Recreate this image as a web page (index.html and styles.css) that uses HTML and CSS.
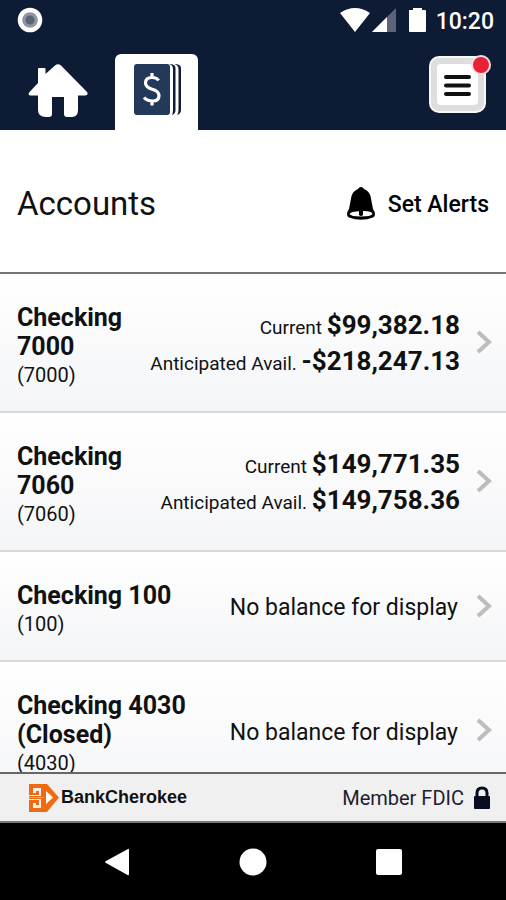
FILE: index.html
```html
<!DOCTYPE html>
<html lang="en">
<head>
<meta charset="utf-8">
<meta name="viewport" content="width=device-width, initial-scale=1">
<title>Accounts</title>
<link rel="stylesheet" href="styles.css">
</head>
<body>
<div class="status">
  <svg width="26" height="26" viewBox="0 0 26 26" aria-hidden="true"><circle cx="13" cy="13" r="12.3" fill="#fff"/><circle cx="13" cy="13" r="7.8" fill="#8d96a5"/><circle cx="13" cy="13" r="4.5" fill="#5a6475"/></svg>
  <div class="status-right">
    <svg width="90" height="26" viewBox="0 0 90 26" aria-hidden="true"><path d="M0 6Q15-4 30 6L15 25Z" fill="#fff"/><path d="M32 25L56 1V25Z" fill="#5a6579"/><path d="M32 25L47 10V25Z" fill="#fff"/><path d="M69 3H73V1H82V3H85Q86 3 86 4V24Q86 25 85 25H70Q69 25 69 24Z" fill="#fff"/></svg>
    <span class="clock">10:20</span>
  </div>
</div>
<nav class="tabs">
  <a class="tab" href="#home" aria-label="Home"><svg width="62" height="54" viewBox="0 0 62 54" aria-hidden="true"><path d="M11 5Q11 4 12 4H17.500Q18.500 4 18.500 5V10L28 1.500Q31 -1 34 1.500L60 28Q62 31 58 31.500H51V46Q51 53 45 53H40Q37 53 37 50V33H25V50Q25 53 22 53H19Q11 53 11 46V31.500H4Q0 31.500 2.500 28L11 19Z" fill="#fff"/></svg></a>
  <a class="tab tab-active" href="#accounts" aria-label="Accounts"><svg width="50" height="54" viewBox="0 0 50 54" aria-hidden="true"><rect x="0" y="1" width="36" height="51" rx="3" fill="#23395a"/><path d="M35 1Q41.500 1 41.500 5V47Q41.500 51 38 52Q39 50 39 47V6Q39 2 35 1ZM40 1Q47 1 47 5V47Q47 51 43 52Q44.500 50 44.500 47V6Q44.500 2 40 1Z" fill="#141c35"/><path d="M24.500 17.500Q23 14.500 18 14.500Q11.500 14.500 11.500 20Q11.500 24 17.500 26Q25 28 25 32.500Q25 38 18.500 38Q13 38 10 34.500M18 10V15M18 37V42.500" fill="none" stroke="#fff" stroke-width="3.200"/></svg></a>
  <button class="menu" type="button" aria-label="Menu, new items"><svg width="62" height="60" viewBox="0 0 62 60" aria-hidden="true"><rect x="1" y="3" width="55" height="55" rx="9" fill="#dedede" stroke="#f8f8f8" stroke-width="2"/><rect x="8" y="10" width="41" height="41" rx="4" fill="#fff"/><path d="M17 23H40M17 31.500H40M17 40H40" stroke="#111" stroke-width="4" stroke-linecap="round"/><circle cx="52" cy="11" r="10" fill="#f6dfe3"/><circle cx="52" cy="11" r="8" fill="#e82236"/></svg></button>
</nav>
<header class="heading">
  <h1>Accounts</h1>
  <button class="alerts" type="button"><svg width="30" height="34" viewBox="0 0 30 34" aria-hidden="true"><path d="M15 0Q17 0 18 2Q23 4 24.500 9L27 22Q31 28 27 30.500Q15 35 3 30.500Q-1 28 3 22L5.500 9Q7 4 12 2Q13 0 15 0Z" fill="#000"/><path d="M3.500 27Q4 24.500 15 24T26.500 27Q25 29.500 15 29.500T3.500 27Z" fill="#fff"/><path d="M13 23H17V28Q15 30 13 28Z" fill="#000"/></svg><span>Set Alerts</span></button>
</header>
<main class="accounts">
  <a class="account" href="#7000"><span class="name"><strong>Checking 7000</strong><small>(7000)</small></span><span class="balances"><span>Current <b>$99,382.18</b></span><span>Anticipated Avail. <b>-$218,247.13</b></span></span><svg width="16" height="24" viewBox="0 0 16 24" aria-hidden="true"><path d="M2 2L13 12L2 22" fill="none" stroke="#bdbdbd" stroke-width="4"/></svg></a>
  <a class="account" href="#7060"><span class="name"><strong>Checking 7060</strong><small>(7060)</small></span><span class="balances"><span>Current <b>$149,771.35</b></span><span>Anticipated Avail. <b>$149,758.36</b></span></span><svg width="16" height="24" viewBox="0 0 16 24" aria-hidden="true"><path d="M2 2L13 12L2 22" fill="none" stroke="#bdbdbd" stroke-width="4"/></svg></a>
  <a class="account" href="#100"><span class="name"><strong>Checking 100</strong><small>(100)</small></span><span class="empty">No balance for display</span><svg width="16" height="24" viewBox="0 0 16 24" aria-hidden="true"><path d="M2 2L13 12L2 22" fill="none" stroke="#bdbdbd" stroke-width="4"/></svg></a>
  <a class="account" href="#4030"><span class="name"><strong>Checking 4030 (Closed)</strong><small>(4030)</small></span><span class="empty">No balance for display</span><svg width="16" height="24" viewBox="0 0 16 24" aria-hidden="true"><path d="M2 2L13 12L2 22" fill="none" stroke="#bdbdbd" stroke-width="4"/></svg></a>
</main>
<footer class="bank">
  <span class="brand"><svg width="31" height="30" viewBox="0 0 31 30" aria-hidden="true"><path d="M1 1H19L31 14.500L19 29H1V17H11V22H8V20H5V25H13V16H1V13H13V5H5V10H8V8H11V12H1Z" fill="#ee6b12"/><path d="M1 14.500H16" stroke="#f5a46c" stroke-width="1"/><path d="M18 8L25 14.500L18 21Z" fill="#fff"/></svg><span>BankCherokee</span></span>
  <span class="member">Member FDIC <svg width="18" height="24" viewBox="0 0 18 24" aria-hidden="true"><path d="M4 11V7Q4 2 9 2T14 7V11" fill="none" stroke="#080e20" stroke-width="3"/><rect x="1" y="10" width="16" height="13" rx="1" fill="#080e20"/></svg></span>
</footer>
<nav class="system">
  <button type="button" aria-label="Back"><svg width="28" height="28" viewBox="0 0 28 28" aria-hidden="true"><path d="M25 1Q26 0 26 2V26Q26 28 24.500 27L3 15Q1 14 3 13Z" fill="#fff"/></svg></button>
  <button type="button" aria-label="Home"><svg width="28" height="28" viewBox="0 0 28 28" aria-hidden="true"><circle cx="14" cy="14" r="13.500" fill="#fff"/></svg></button>
  <button type="button" aria-label="Recent apps"><svg width="28" height="28" viewBox="0 0 28 28" aria-hidden="true"><rect x="1" y="1" width="26" height="26" rx="2" fill="#fff"/></svg></button>
</nav>
</body>
</html>
```
FILE: styles.css
```css
* { box-sizing: border-box; }
body { margin: 0; height: 100vh; display: flex; flex-direction: column; background: #fff; color: #111; font-family: Roboto, sans-serif; font-size: 20px; overflow: hidden; }
svg { display: block; flex: none; }
button { border: 0; padding: 0; background: none; color: inherit; font: inherit; cursor: pointer; }
a { color: inherit; text-decoration: none; }
.status { flex: none; display: flex; justify-content: space-between; height: 54px; padding: 7px 12px 0 17px; background: #0d1b34; color: #fff; }
.status-right { display: flex; gap: 6px; }
.clock { font-size: 23px; font-weight: 500; line-height: 29px; }
.tabs { flex: none; display: flex; height: 76px; padding: 0 15px 0 27px; background: #0d1b34; }
.tab { padding-top: 10px; }
.tab-active { width: 83px; margin-left: 26px; padding: 9px 0 0 19px; border-radius: 6px 6px 0 0; background: #fff; }
.menu { align-self: flex-start; margin-left: auto; }
.heading { flex: none; display: flex; align-items: center; justify-content: space-between; height: 144px; padding: 6px 17px 0; border-bottom: 2px solid #777; }
h1 { margin: 0; font-size: 33px; font-weight: 400; line-height: 40px; }
.alerts { display: flex; align-items: center; gap: 12px; color: #000; font-size: 23px; font-weight: 500; }
.accounts { flex: 1; min-height: 0; overflow: hidden; }
.account { display: flex; align-items: center; padding: 21px 14px 22px 17px; border-bottom: 2px solid #d6d8d9; background: linear-gradient(#fff, #f4f5f7); }
.name { display: flex; flex: 1; flex-direction: column; padding-top: 8px; }
.name strong { font-size: 25px; line-height: 29px; }
.name small { font-size: 20px; line-height: 28px; }
.balances { display: flex; flex-direction: column; align-items: flex-end; margin-right: 16px; padding-top: 8px; font-size: 19px; line-height: 36px; white-space: nowrap; }
.balances b { font-size: 26px; line-height: 26px; }
.empty { margin-right: 18px; padding-top: 4px; font-size: 23px; white-space: nowrap; }
.bank { flex: none; display: flex; align-items: center; justify-content: space-between; height: 51px; padding: 0 15px 0 28px; border-top: 2px solid #666; border-bottom: 2px solid #777; background: #f0f0f0; }
.brand { display: flex; align-items: center; gap: 2px; font-family: "Liberation Sans", sans-serif; font-size: 18px; font-weight: 700; }
.member { display: flex; align-items: center; gap: 9px; color: #1c2032; }
.system { flex: none; display: flex; align-items: center; justify-content: center; gap: 108px; height: 77px; background: #000; }
```
